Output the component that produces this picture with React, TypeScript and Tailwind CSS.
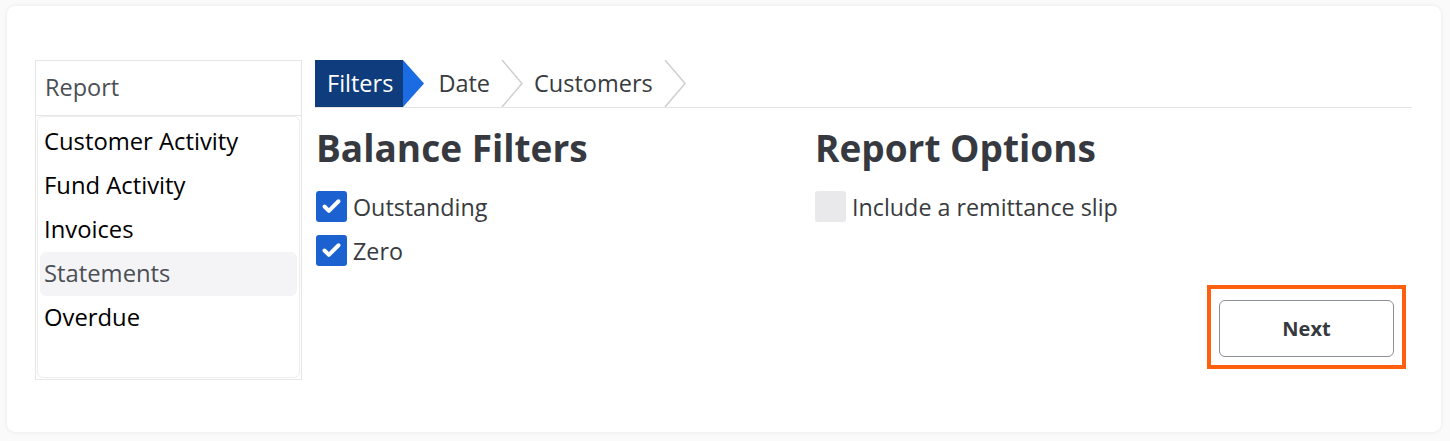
import { Check } from 'lucide-react'

const reports = ['Customer Activity', 'Fund Activity', 'Invoices', 'Statements', 'Overdue']

export default function App() {
  return (
    <div className="min-h-[441px] bg-[#fafafa] pt-[6px] pl-[7px] pr-[9px] pb-[9px]" style={{ fontFamily: '"Open Sans", Lato, sans-serif' }}>
      <div className="flex rounded-lg bg-white shadow-[0_0_4px_rgba(0,0,0,0.08)] pt-[54px] pl-[28px] pr-[29px] h-[426px]">
        {/* report list */}
        <aside className="w-[267px] h-[320px] border border-[#e6e6e6] flex flex-col">
          <div className="h-[55px] flex items-center px-[9px] text-[23.5px] text-[#4b4f55] border-b border-[#e6e6e6]">Report</div>
          <ul className="flex-1 m-[1px] mt-0 rounded-md border border-[#ededed] pt-[3px] px-[2px]">
            {reports.map(r => (
              <li
                key={r}
                className={`h-[44px] flex items-center px-[4px] text-[23.8px] rounded-md ${r === 'Statements' ? 'bg-[#f4f4f6] text-[#4b4f55]' : 'text-black'}`}
              >
                {r}
              </li>
            ))}
          </ul>
        </aside>

        <section className="flex-1 ml-[13px] flex flex-col">
          {/* wizard steps */}
          <div className="flex items-stretch h-[48px] border-b border-[#e4e4e4]">
            <div className="flex items-center">
              <div className="h-full bg-[#0f3c7c] text-white text-[23.5px] flex items-center pl-[12px] pr-[10px]">Filters</div>
              <svg width="22" height="47" viewBox="0 0 22 47" className="block">
                <polygon points="0,0 21,23.5 0,47" fill="#1b6be3" />
              </svg>
            </div>
            <div className="flex items-center pl-[13px] text-[23.5px] text-[#383b40]">Date</div>
            <svg width="34" height="47" viewBox="0 0 34 47" className="ml-[10px] block">
              <polyline points="2,0 22,23.5 2,47" fill="none" stroke="#cfcfcf" strokeWidth="1.5" />
            </svg>
            <div className="flex items-center text-[23.5px] text-[#383b40]">Customers</div>
            <svg width="34" height="47" viewBox="0 0 34 47" className="ml-[10px] block">
              <polyline points="2,0 22,23.5 2,47" fill="none" stroke="#cfcfcf" strokeWidth="1.5" />
            </svg>
          </div>

          <div className="flex mt-[18px]">
            <div className="w-[500px] pl-[1px]">
              <h2 className="text-[37px] font-bold leading-[44px] text-[#363a40]">Balance Filters</h2>
              <div className="mt-[21px] flex flex-col gap-[13px]">
                {['Outstanding', 'Zero'].map(l => (
                  <label key={l} className="flex items-center gap-[6px] text-[23.3px] text-[#383b40] leading-[30px]">
                    <span className="w-[31px] h-[31px] rounded-[3px] bg-[#1b62d0] flex items-center justify-center">
                      <Check size={21} strokeWidth={4.5} className="text-white" />
                    </span>
                    {l}
                  </label>
                ))}
              </div>
            </div>
            <div>
              <h2 className="text-[37px] font-bold leading-[44px] text-[#363a40]">Report Options</h2>
              <label className="mt-[21px] flex items-center gap-[6px] text-[23.3px] text-[#383b40] leading-[30px]">
                <span className="w-[31px] h-[31px] rounded-[3px] bg-[#e9e9eb]" />
                Include a remittance slip
              </label>
            </div>
          </div>

          <div className="flex justify-end mt-[19px] pr-[6px]">
            <div className="border-4 border-[#ff5f0f] pt-[11px] px-[8px] pb-[8px]">
              <button className="w-[175px] h-[57px] rounded-md border border-[#8b8f96] bg-white text-[20px] font-bold text-[#363a40]">
                Next
              </button>
            </div>
          </div>
        </section>
      </div>
    </div>
  )
}
